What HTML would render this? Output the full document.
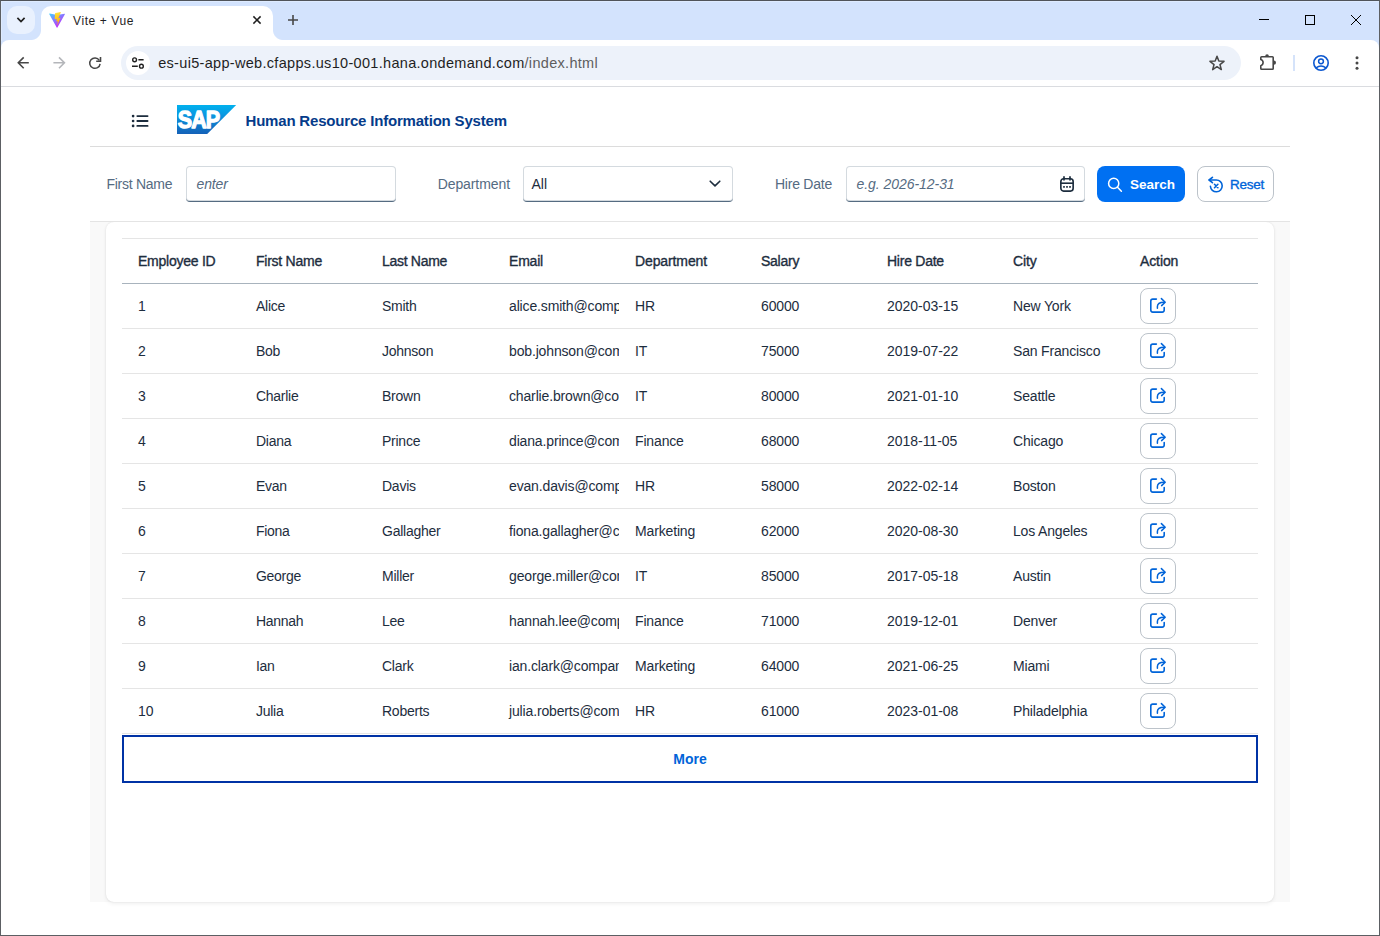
<!DOCTYPE html>
<html lang="en">
<head>
<meta charset="utf-8">
<title>Vite + Vue</title>
<style>
*{box-sizing:border-box;margin:0;padding:0}
html,body{width:1380px;height:936px;overflow:hidden;background:#fff}
body{position:relative;font-family:"Liberation Sans",sans-serif;font-size:14px;color:#1d2d3e}
.abs{position:absolute}
svg{display:block;overflow:visible}
/* ---------- window frame ---------- */
#frame{position:absolute;left:0;top:0;width:1380px;height:936px;border:1px solid #5c5f63;border-top-color:#50545a;pointer-events:none;z-index:50}
/* ---------- browser chrome ---------- */
#tabstrip{position:absolute;left:0;top:0;width:1380px;height:52px;background:#d3e3fd}
#tabstrip:before{content:"";position:absolute;left:1px;top:1px;width:1378px;height:39px;border-top:1px solid #deebff;border-left:1px solid #deebff}
#tabsearch{position:absolute;left:7px;top:6px;width:28px;height:28px;border-radius:10px;background:#e9f1fe}
#tab{position:absolute;left:41px;top:6px;width:232px;height:35px;background:#fff;border-radius:10px 10px 0 0}
#tab:before,#tab:after{content:"";position:absolute;bottom:1px;width:10px;height:10px;background:radial-gradient(circle at 0 0,rgba(255,255,255,0) 9.5px,#fff 10.5px)}
#tab:before{left:-10px}
#tab:after{right:-10px;background:radial-gradient(circle at 100% 0,rgba(255,255,255,0) 9.5px,#fff 10.5px)}
#tabtitle{position:absolute;left:73px;top:14px;font-size:12px;line-height:14px;letter-spacing:0.6px;color:#1f1f1f;white-space:nowrap}
#toolbar{position:absolute;left:1px;top:40px;width:1378px;height:46px;background:#fff;border-radius:8px 8px 0 0}
#sep{position:absolute;left:1px;top:86px;width:1378px;height:1px;background:#dadce0}
#omni{position:absolute;left:121px;top:46px;width:1120px;height:34px;border-radius:17px;background:#edf2fa}
#siteinfo{position:absolute;left:126px;top:51px;width:24px;height:24px;border-radius:12px;background:#fff}
#url{position:absolute;left:158.2px;top:54.5px;font-size:14.5px;line-height:17px;letter-spacing:0.31px;color:#1f1f1f;white-space:nowrap}
#url span{color:#5e5e5e}
/* ---------- page ---------- */

#page{position:absolute;left:0;top:0;width:1380px;height:936px;background:none;overflow:visible}
.t{left:245.5px;top:111px;font-size:15px;line-height:20px;letter-spacing:-0.19px;font-weight:bold;color:#053b8a;white-space:nowrap}
.lbl{top:175px;font-size:14px;line-height:18px;color:#556b82;white-space:nowrap}
#l1{left:106.5px;letter-spacing:-0.27px}#l2{left:437.7px;letter-spacing:-0.09px}#l3{left:775px;letter-spacing:-0.24px}
.inp{top:166px;height:36px;background:#fff;border-radius:4px;box-shadow:inset 0 0 0 1px rgba(85,107,129,.25);border-bottom:1px solid #556b81;font-size:14px;line-height:18px;white-space:nowrap}
.inp .ph{position:absolute;left:10.5px;top:9px;font-style:italic;color:#556b82}
#ph1{letter-spacing:-0.15px}#ph2{letter-spacing:-0.05px}
.inp .val{position:absolute;left:8.5px;top:9px;color:#1d2d3e}
#bsearch{left:1097px;top:166px;width:88px;height:36px;border-radius:8px;background:#0070f2}
#tsearch{position:absolute;left:33px;top:9.5px;font-size:13.5px;line-height:18px;font-weight:bold;color:#fff}
#breset{left:1197px;top:166px;width:77px;height:36px;border-radius:8px;background:#fff;border:1px solid #bcc3ca}
#treset{position:absolute;left:32px;top:8.5px;letter-spacing:-0.25px;font-size:13.5px;line-height:18px;color:#0064d9;-webkit-text-stroke:0.35px #0064d9}
#card{left:106px;top:222px;width:1168px;height:680px;background:#fff;border-radius:8px;box-shadow:0 0 2px rgba(0,0,0,.10),0 2px 4px rgba(0,0,0,.06);clip-path:inset(0 -10px -10px -10px)}
#tbl{left:122px;top:238px;width:1136px;border-collapse:collapse;table-layout:fixed;border-top:1px solid #e5e5e5;font-size:14px;letter-spacing:-0.2px}
#tbl th,#tbl td{height:45px;padding:0 0 0 16px;text-align:left;vertical-align:middle;white-space:nowrap;overflow:hidden;font-weight:normal;color:#1d2d3e}
#tbl th{border-bottom:1px solid #a8b3bd;-webkit-text-stroke:0.35px #1d2d3e}
#tbl td{border-bottom:1px solid #e5e5e5}
#tbl td:nth-child(1){letter-spacing:0}#tbl td:nth-child(2){letter-spacing:-0.28px}#tbl td:nth-child(3){letter-spacing:-0.25px}#tbl td:nth-child(4){letter-spacing:-0.15px}#tbl td:nth-child(5){letter-spacing:-0.15px}#tbl td:nth-child(6){letter-spacing:-0.13px}#tbl td:nth-child(7){letter-spacing:-0.03px}#tbl td:nth-child(8){letter-spacing:-0.17px}
#tbl th:nth-child(1),#tbl th:nth-child(2),#tbl th:nth-child(6),#tbl th:nth-child(7){letter-spacing:-0.25px}#tbl th:nth-child(3){letter-spacing:-0.3px}#tbl th:nth-child(5),#tbl th:nth-child(8),#tbl th:nth-child(9){letter-spacing:-0.11px}
.ab{width:36px;height:36px;border:1px solid #bcc3ca;border-radius:8px;background:#fff;display:flex;align-items:center;justify-content:center}
#more{left:122px;top:735px;width:1136px;height:48px;border:2px solid #0032a5;background:#fff}
#tmore{position:absolute;left:0;width:100%;top:13px;text-align:center;font-size:14px;line-height:18px;font-weight:bold;color:#0064d9}

</style>
</head>
<body>
<div id="tabstrip"></div>
<div id="tabsearch"></div>
<div id="tab"></div>
<div id="tabtitle">Vite + Vue</div>
<div id="toolbar"></div>
<div id="omni"></div>
<div id="siteinfo"></div>
<div id="url">es-ui5-app-web.cfapps.us10-001.hana.ondemand.com<span>/index.html</span></div>
<div id="sep"></div>
<!--CI-START--><svg class="abs" style="left:0;top:0" width="1380" height="90" viewBox="0 0 1380 90" fill="none">
<!-- tab search chevron -->
<path d="M17.4 17.9 L21 21.5 L24.6 17.9" stroke="#1f1f1f" stroke-width="1.7"/>
<!-- vite favicon -->
<defs>
<linearGradient id="vg1" x1="0" y1="0" x2="0.6" y2="0.85"><stop offset="0" stop-color="#41d1ff"/><stop offset="1" stop-color="#bd34fe"/></linearGradient>
<linearGradient id="vg2" x1="0.4" y1="0" x2="0.55" y2="1"><stop offset="0" stop-color="#ffea83"/><stop offset="0.1" stop-color="#ffdd35"/><stop offset="1" stop-color="#ffa800"/></linearGradient>
</defs>
<path d="M49.2 14.1 L56.7 27.6 Q57 28.1 57.4 27.6 L64.9 14.2 Q65.1 13.6 64.5 13.7 L57.2 15.1 L49.7 13.6 Q49 13.6 49.2 14.1 Z" fill="url(#vg1)"/>
<path d="M60.5 12.1 L55.3 13.1 Q55 13.2 55 13.5 L54.7 18.9 Q54.7 19.3 55.1 19.2 L56.5 18.9 Q56.9 18.8 56.8 19.2 L56.4 21.3 Q56.3 21.7 56.7 21.6 L57.6 21.3 Q58 21.2 57.9 21.6 L57.2 24.9 Q57.2 25.3 57.4 24.9 L60.4 18.2 Q60.6 17.8 60.2 17.9 L58.7 18.2 Q58.3 18.3 58.4 17.9 L60.8 12.5 Q60.9 12 60.5 12.1 Z" fill="url(#vg2)"/>
<!-- tab close -->
<path d="M253.4 16.4 L260.6 23.6 M260.6 16.4 L253.4 23.6" stroke="#1f1f1f" stroke-width="1.5"/>
<!-- new tab plus -->
<path d="M288 20 H298 M293 15 V25" stroke="#474747" stroke-width="1.6"/>
<!-- window controls -->
<path d="M1259 19.5 H1269" stroke="#000" stroke-width="1"/>
<rect x="1305.5" y="15.5" width="9" height="9" stroke="#000" stroke-width="1"/>
<path d="M1351 15 L1361 25 M1361 15 L1351 25" stroke="#000" stroke-width="1"/>
<!-- back -->
<path d="M28.8 62.8 H18.8 M23.7 57.4 L18.3 62.8 L23.7 68.2" stroke="#474747" stroke-width="1.6"/>
<!-- forward -->
<path d="M53.4 62.8 H64 M59 57.4 L64.4 62.8 L59 68.2" stroke="#b4b6ba" stroke-width="1.6"/>
<!-- reload -->
<path d="M100.1 63.8 A5.2 5.2 0 1 1 99.3 60.3" stroke="#474747" stroke-width="1.5"/>
<path d="M100.5 56.9 V61.3 H96.2" stroke="#474747" stroke-width="1.6"/>
<!-- site info (tune) -->
<circle cx="134.6" cy="59.8" r="1.9" stroke="#1f1f1f" stroke-width="1.4"/>
<path d="M138.4 59.8 H143.6 M132 66.2 H137.8" stroke="#1f1f1f" stroke-width="1.5"/>
<circle cx="141.4" cy="66.2" r="1.9" stroke="#1f1f1f" stroke-width="1.4"/>
<!-- star -->
<path d="M1217.00 56.20 L1218.82 61.09 L1224.04 61.31 L1219.95 64.56 L1221.35 69.59 L1217.00 66.70 L1212.65 69.59 L1214.05 64.56 L1209.96 61.31 L1215.18 61.09 Z" stroke="#474747" stroke-width="1.5" stroke-linejoin="round"/>
<!-- extensions puzzle -->
<path d="M1260.8 57.6 Q1260.8 56.8 1261.6 56.8 H1272.4 Q1273.2 56.8 1273.2 57.6 V68.4 Q1273.2 69.2 1272.4 69.2 H1261.6 Q1260.8 69.2 1260.8 68.4 V65.7 Q1263.1 65 1263.1 62.6 Q1263.1 60.2 1260.8 59.5 Z" stroke="#474747" stroke-width="1.6" stroke-linejoin="round"/>
<path d="M1265.2 56.2 A1.85 1.9 0 0 1 1268.9 56.2 Z M1273.9 60.6 A2.1 2.05 0 0 1 1273.9 64.7 Z" fill="#474747"/>
<!-- divider -->
<path d="M1294 55 V71" stroke="#cbdcf9" stroke-width="1.6"/>
<!-- profile -->
<circle cx="1321" cy="63" r="7.2" stroke="#0b57d0" stroke-width="1.6"/>
<circle cx="1321" cy="61.3" r="2.4" stroke="#0b57d0" stroke-width="1.5"/>
<path d="M1316 67.8 Q1321 64.2 1326 67.8" stroke="#0b57d0" stroke-width="1.5"/>
<!-- menu dots -->
<circle cx="1357" cy="57.8" r="1.5" fill="#474747"/><circle cx="1357" cy="63" r="1.5" fill="#474747"/><circle cx="1357" cy="68.2" r="1.5" fill="#474747"/>
</svg>
<!--CI-END-->
<div id="page">
<!--PG-START--><!-- shell bar -->
<div class="abs" style="left:90px;top:146px;width:1200px;height:1px;background:#dcdcdc"></div>
<svg class="abs" style="left:130px;top:112px" width="20" height="18" viewBox="130 112 20 18" fill="none">
<circle cx="133.1" cy="116.1" r="1.35" fill="#1d2d3e"/><circle cx="133.1" cy="121" r="1.35" fill="#1d2d3e"/><circle cx="133.1" cy="125.9" r="1.35" fill="#1d2d3e"/>
<path d="M137.3 116.1 H147.6 M137.3 121 H147.6 M137.3 125.9 H147.6" stroke="#1d2d3e" stroke-width="1.8" stroke-linecap="round"/>
</svg>
<svg class="abs" style="left:177px;top:105px" width="60" height="30" viewBox="0 0 60 30">
<defs><linearGradient id="sapg" x1="0" y1="0" x2="0" y2="1"><stop offset="0" stop-color="#00b1ee"/><stop offset="0.3" stop-color="#0a9be3"/><stop offset="1" stop-color="#1461b8"/></linearGradient></defs>
<path d="M0 0 H59.2 L30.2 29 H0 Z" fill="url(#sapg)"/>
<text transform="translate(0.7 23.4) scale(0.90 1)" font-family="'Liberation Sans',sans-serif" font-weight="bold" font-size="23.9" letter-spacing="-1.0" fill="#fff" stroke="#fff" stroke-width="1.3" stroke-linejoin="round">SAP</text>
</svg>
<div id="apptitle" class="abs t">Human Resource Information System</div>
<!-- filter bar -->
<div id="l1" class="abs lbl">First Name</div>
<div class="abs inp" style="left:186px;width:210px"><span id="ph1" class="ph">enter</span></div>
<div id="l2" class="abs lbl">Department</div>
<div class="abs inp" style="left:523px;width:210px"><span id="selv" class="val">All</span>
<svg class="abs" style="left:185px;top:13px" width="14" height="10" viewBox="0 0 14 10" fill="none"><path d="M2.2 2.2 L7 6.9 L11.8 2.2" stroke="#1d2d3e" stroke-width="1.6" stroke-linecap="round" stroke-linejoin="round"/></svg></div>
<div id="l3" class="abs lbl">Hire Date</div>
<div class="abs inp" style="left:846px;width:239px"><span id="ph2" class="ph">e.g. 2026-12-31</span>
<svg class="abs" style="left:213px;top:9px" width="16" height="18" viewBox="0 0 16 18" fill="none">
<rect x="1.85" y="3.75" width="12.3" height="12.3" rx="2.7" stroke="#1d2d3e" stroke-width="1.65"/>
<path d="M1.8 8.2 H14.2" stroke="#1d2d3e" stroke-width="1.6"/>
<path d="M5 1.9 V4.8 M11 1.9 V4.8" stroke="#1d2d3e" stroke-width="1.7" stroke-linecap="round"/>
<rect x="4.15" y="11.05" width="1.7" height="1.7" fill="#1d2d3e"/><rect x="7.15" y="11.05" width="1.7" height="1.7" fill="#1d2d3e"/><rect x="10.15" y="11.05" width="1.7" height="1.7" fill="#1d2d3e"/>
</svg></div>
<div id="bsearch" class="abs"><svg class="abs" style="left:9px;top:10px" width="18" height="18" viewBox="0 0 18 18" fill="none"><circle cx="7.7" cy="7.4" r="5.1" stroke="#fff" stroke-width="1.5"/><path d="M11.5 11.2 L15.4 15.2" stroke="#fff" stroke-width="1.5" stroke-linecap="round"/></svg><span id="tsearch">Search</span></div>
<div id="breset" class="abs"><svg class="abs" style="left:8px;top:8px" width="20" height="20" viewBox="0 0 20 20" fill="none">
<path d="M3.3 5 H10.3 A5.9 5.9 0 1 1 4.4 11.3" stroke="#0064d9" stroke-width="1.6" stroke-linecap="round"/>
<path d="M6.4 2.4 L3.1 5 L6.4 7.6" stroke="#0064d9" stroke-width="1.7" stroke-linecap="round" stroke-linejoin="round"/>
<path d="M8.5 9.3 L11.9 12.7 M11.9 9.3 L8.5 12.7" stroke="#0064d9" stroke-width="1.6" stroke-linecap="round"/>
</svg><span id="treset">Reset</span></div>
<!-- content area -->
<div class="abs" style="left:90px;top:221px;width:1200px;height:1px;background:#e4e4e4"></div>
<div class="abs" style="left:90px;top:222px;width:1200px;height:680px;background:#f9f9f9"></div>
<div id="card" class="abs"></div>
<table id="tbl" class="abs">
<colgroup><col style="width:118px"><col style="width:126px"><col style="width:127px"><col style="width:126px"><col style="width:126px"><col style="width:126px"><col style="width:126px"><col style="width:127px"><col></colgroup>
<thead><tr><th>Employee ID</th><th>First Name</th><th>Last Name</th><th>Email</th><th>Department</th><th>Salary</th><th>Hire Date</th><th>City</th><th>Action</th></tr></thead>
<tbody>
<tr><td><span>1</span></td><td><span>Alice</span></td><td><span>Smith</span></td><td><span>alice.smith@company.com</span></td><td><span>HR</span></td><td><span>60000</span></td><td><span>2020-03-15</span></td><td><span>New York</span></td><td><div class="ab"><svg width="18" height="18" viewBox="0 0 18 18" fill="none"><path d="M7.4 2.1 H3.8 Q1.8 2.1 1.8 4.1 V13.1 Q1.8 15.1 3.8 15.1 H13.2 Q15.2 15.1 15.2 13.1 V10.6" stroke="#0064d9" stroke-width="1.6" stroke-linecap="round"/><path d="M8.4 11.3 V9.6 Q8.4 5.2 15 5.2" stroke="#0064d9" stroke-width="1.5" stroke-linecap="round"/><path d="M12.4 1.6 L16.2 5.2 L12.6 8.6" stroke="#0064d9" stroke-width="1.5" stroke-linecap="round" stroke-linejoin="round"/></svg></div></td></tr>
<tr><td><span>2</span></td><td><span>Bob</span></td><td><span>Johnson</span></td><td><span>bob.johnson@company.com</span></td><td><span>IT</span></td><td><span>75000</span></td><td><span>2019-07-22</span></td><td><span>San Francisco</span></td><td><div class="ab"><svg width="18" height="18" viewBox="0 0 18 18" fill="none"><path d="M7.4 2.1 H3.8 Q1.8 2.1 1.8 4.1 V13.1 Q1.8 15.1 3.8 15.1 H13.2 Q15.2 15.1 15.2 13.1 V10.6" stroke="#0064d9" stroke-width="1.6" stroke-linecap="round"/><path d="M8.4 11.3 V9.6 Q8.4 5.2 15 5.2" stroke="#0064d9" stroke-width="1.5" stroke-linecap="round"/><path d="M12.4 1.6 L16.2 5.2 L12.6 8.6" stroke="#0064d9" stroke-width="1.5" stroke-linecap="round" stroke-linejoin="round"/></svg></div></td></tr>
<tr><td><span>3</span></td><td><span>Charlie</span></td><td><span>Brown</span></td><td><span>charlie.brown@company.com</span></td><td><span>IT</span></td><td><span>80000</span></td><td><span>2021-01-10</span></td><td><span>Seattle</span></td><td><div class="ab"><svg width="18" height="18" viewBox="0 0 18 18" fill="none"><path d="M7.4 2.1 H3.8 Q1.8 2.1 1.8 4.1 V13.1 Q1.8 15.1 3.8 15.1 H13.2 Q15.2 15.1 15.2 13.1 V10.6" stroke="#0064d9" stroke-width="1.6" stroke-linecap="round"/><path d="M8.4 11.3 V9.6 Q8.4 5.2 15 5.2" stroke="#0064d9" stroke-width="1.5" stroke-linecap="round"/><path d="M12.4 1.6 L16.2 5.2 L12.6 8.6" stroke="#0064d9" stroke-width="1.5" stroke-linecap="round" stroke-linejoin="round"/></svg></div></td></tr>
<tr><td><span>4</span></td><td><span>Diana</span></td><td><span>Prince</span></td><td><span>diana.prince@company.com</span></td><td><span>Finance</span></td><td><span>68000</span></td><td><span>2018-11-05</span></td><td><span>Chicago</span></td><td><div class="ab"><svg width="18" height="18" viewBox="0 0 18 18" fill="none"><path d="M7.4 2.1 H3.8 Q1.8 2.1 1.8 4.1 V13.1 Q1.8 15.1 3.8 15.1 H13.2 Q15.2 15.1 15.2 13.1 V10.6" stroke="#0064d9" stroke-width="1.6" stroke-linecap="round"/><path d="M8.4 11.3 V9.6 Q8.4 5.2 15 5.2" stroke="#0064d9" stroke-width="1.5" stroke-linecap="round"/><path d="M12.4 1.6 L16.2 5.2 L12.6 8.6" stroke="#0064d9" stroke-width="1.5" stroke-linecap="round" stroke-linejoin="round"/></svg></div></td></tr>
<tr><td><span>5</span></td><td><span>Evan</span></td><td><span>Davis</span></td><td><span>evan.davis@company.com</span></td><td><span>HR</span></td><td><span>58000</span></td><td><span>2022-02-14</span></td><td><span>Boston</span></td><td><div class="ab"><svg width="18" height="18" viewBox="0 0 18 18" fill="none"><path d="M7.4 2.1 H3.8 Q1.8 2.1 1.8 4.1 V13.1 Q1.8 15.1 3.8 15.1 H13.2 Q15.2 15.1 15.2 13.1 V10.6" stroke="#0064d9" stroke-width="1.6" stroke-linecap="round"/><path d="M8.4 11.3 V9.6 Q8.4 5.2 15 5.2" stroke="#0064d9" stroke-width="1.5" stroke-linecap="round"/><path d="M12.4 1.6 L16.2 5.2 L12.6 8.6" stroke="#0064d9" stroke-width="1.5" stroke-linecap="round" stroke-linejoin="round"/></svg></div></td></tr>
<tr><td><span>6</span></td><td><span>Fiona</span></td><td><span>Gallagher</span></td><td><span>fiona.gallagher@company.com</span></td><td><span>Marketing</span></td><td><span>62000</span></td><td><span>2020-08-30</span></td><td><span>Los Angeles</span></td><td><div class="ab"><svg width="18" height="18" viewBox="0 0 18 18" fill="none"><path d="M7.4 2.1 H3.8 Q1.8 2.1 1.8 4.1 V13.1 Q1.8 15.1 3.8 15.1 H13.2 Q15.2 15.1 15.2 13.1 V10.6" stroke="#0064d9" stroke-width="1.6" stroke-linecap="round"/><path d="M8.4 11.3 V9.6 Q8.4 5.2 15 5.2" stroke="#0064d9" stroke-width="1.5" stroke-linecap="round"/><path d="M12.4 1.6 L16.2 5.2 L12.6 8.6" stroke="#0064d9" stroke-width="1.5" stroke-linecap="round" stroke-linejoin="round"/></svg></div></td></tr>
<tr><td><span>7</span></td><td><span>George</span></td><td><span>Miller</span></td><td><span>george.miller@company.com</span></td><td><span>IT</span></td><td><span>85000</span></td><td><span>2017-05-18</span></td><td><span>Austin</span></td><td><div class="ab"><svg width="18" height="18" viewBox="0 0 18 18" fill="none"><path d="M7.4 2.1 H3.8 Q1.8 2.1 1.8 4.1 V13.1 Q1.8 15.1 3.8 15.1 H13.2 Q15.2 15.1 15.2 13.1 V10.6" stroke="#0064d9" stroke-width="1.6" stroke-linecap="round"/><path d="M8.4 11.3 V9.6 Q8.4 5.2 15 5.2" stroke="#0064d9" stroke-width="1.5" stroke-linecap="round"/><path d="M12.4 1.6 L16.2 5.2 L12.6 8.6" stroke="#0064d9" stroke-width="1.5" stroke-linecap="round" stroke-linejoin="round"/></svg></div></td></tr>
<tr><td><span>8</span></td><td><span>Hannah</span></td><td><span>Lee</span></td><td><span>hannah.lee@company.com</span></td><td><span>Finance</span></td><td><span>71000</span></td><td><span>2019-12-01</span></td><td><span>Denver</span></td><td><div class="ab"><svg width="18" height="18" viewBox="0 0 18 18" fill="none"><path d="M7.4 2.1 H3.8 Q1.8 2.1 1.8 4.1 V13.1 Q1.8 15.1 3.8 15.1 H13.2 Q15.2 15.1 15.2 13.1 V10.6" stroke="#0064d9" stroke-width="1.6" stroke-linecap="round"/><path d="M8.4 11.3 V9.6 Q8.4 5.2 15 5.2" stroke="#0064d9" stroke-width="1.5" stroke-linecap="round"/><path d="M12.4 1.6 L16.2 5.2 L12.6 8.6" stroke="#0064d9" stroke-width="1.5" stroke-linecap="round" stroke-linejoin="round"/></svg></div></td></tr>
<tr><td><span>9</span></td><td><span>Ian</span></td><td><span>Clark</span></td><td><span>ian.clark@company.com</span></td><td><span>Marketing</span></td><td><span>64000</span></td><td><span>2021-06-25</span></td><td><span>Miami</span></td><td><div class="ab"><svg width="18" height="18" viewBox="0 0 18 18" fill="none"><path d="M7.4 2.1 H3.8 Q1.8 2.1 1.8 4.1 V13.1 Q1.8 15.1 3.8 15.1 H13.2 Q15.2 15.1 15.2 13.1 V10.6" stroke="#0064d9" stroke-width="1.6" stroke-linecap="round"/><path d="M8.4 11.3 V9.6 Q8.4 5.2 15 5.2" stroke="#0064d9" stroke-width="1.5" stroke-linecap="round"/><path d="M12.4 1.6 L16.2 5.2 L12.6 8.6" stroke="#0064d9" stroke-width="1.5" stroke-linecap="round" stroke-linejoin="round"/></svg></div></td></tr>
<tr><td><span>10</span></td><td><span>Julia</span></td><td><span>Roberts</span></td><td><span>julia.roberts@company.com</span></td><td><span>HR</span></td><td><span>61000</span></td><td><span>2023-01-08</span></td><td><span>Philadelphia</span></td><td><div class="ab"><svg width="18" height="18" viewBox="0 0 18 18" fill="none"><path d="M7.4 2.1 H3.8 Q1.8 2.1 1.8 4.1 V13.1 Q1.8 15.1 3.8 15.1 H13.2 Q15.2 15.1 15.2 13.1 V10.6" stroke="#0064d9" stroke-width="1.6" stroke-linecap="round"/><path d="M8.4 11.3 V9.6 Q8.4 5.2 15 5.2" stroke="#0064d9" stroke-width="1.5" stroke-linecap="round"/><path d="M12.4 1.6 L16.2 5.2 L12.6 8.6" stroke="#0064d9" stroke-width="1.5" stroke-linecap="round" stroke-linejoin="round"/></svg></div></td></tr>
</tbody>
</table>
<div id="more" class="abs"><span id="tmore">More</span></div>
<!--PG-END-->
</div>
<div id="frame"></div>
</body>
</html>
